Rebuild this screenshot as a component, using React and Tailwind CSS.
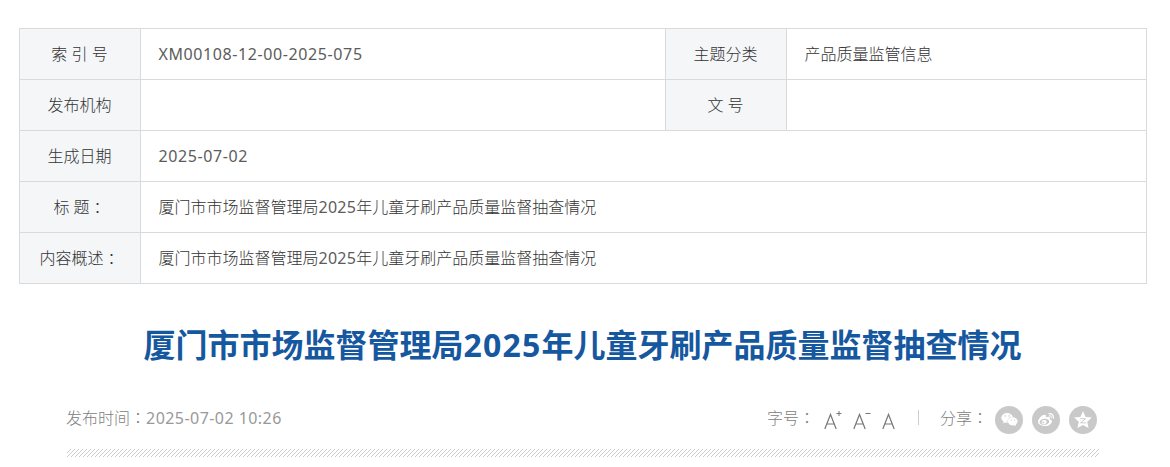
import React from "react";
import { FaWeixin, FaWeibo } from "react-icons/fa";

const title = ["厦门市市场监督管理局", "2025", "年儿童牙刷产品质量监督抽查情况"];

const Label = ({ children, className = "" }) => (
  <div className={`bg-[#f4f6f8] border-r border-[#dadada] h-[50px] pr-px flex items-center justify-center whitespace-pre ${className}`}>
    {children}
  </div>
);

const Latin = ({ children, className = "text-[#5c5c5c] tracking-[0.6px]" }) => (
  <span className={`font-normal ${className}`}>{children}</span>
);

// full-width colon, centred in its cell
const Colon = () => <span className="font-['Noto_Sans_CJK_TC',sans-serif]" lang="zh-TW">：</span>;

const Title = ({ latin }) => (
  <span>
    {title[0]}
    <span className={latin}>{title[1]}</span>
    {title[2]}
  </span>
);

const FontSize = ({ sign }) => (
  <svg width="20" height="22" viewBox="0 0 20 22" fill="none" stroke="#777" strokeWidth="1.2">
    <path d="M.8 19 6.5 4.5 12.2 19M2.8 14h7.4" />
    {sign && <path d="M12.5 3.5h5" strokeWidth="1" />}
    {sign === "+" && <path d="M15 1v5" strokeWidth="1" />}
  </svg>
);

const Share = ({ children }) => (
  <button className="w-7 h-7 rounded-full bg-[#c9c9c9] text-white flex items-center justify-center">
    {children}
  </button>
);

const App = () => {
  return (
    <div className="w-[1170px] h-[467px] bg-white overflow-hidden pt-7 pl-[19px] text-base font-light text-[#333] font-['Noto_Sans','Noto_Sans_CJK_SC',sans-serif]">

      {/* INFO TABLE */}
      <div className="w-[1128px] border border-[#dadada] divide-y divide-[#dadada]">
        <div className="grid grid-cols-[121px_524px_122px_1fr] items-center">
          <Label>索 引 号</Label>
          <div className="pl-[17.5px]"><Latin>XM00108-12-00-2025-075</Latin></div>
          <Label className="border-l">主题分类</Label>
          <div className="pl-[17.5px]">产品质量监管信息</div>
        </div>
        <div className="grid grid-cols-[121px_524px_122px_1fr] items-center">
          <Label>发布机构</Label>
          <div></div>
          <Label className="border-l">文 号</Label>
          <div></div>
        </div>
        <div className="grid grid-cols-[121px_1fr] items-center">
          <Label>生成日期</Label>
          <div className="pl-[17.5px]"><Latin>2025-07-02</Latin></div>
        </div>
        <div className="grid grid-cols-[121px_1fr] items-center">
          <Label>标 题<Colon /></Label>
          <div className="pl-[17.5px]"><Title latin="font-normal text-[#5c5c5c] tracking-[0.25px]" /></div>
        </div>
        <div className="grid grid-cols-[121px_1fr] items-center">
          <Label>内容概述<Colon /></Label>
          <div className="pl-[17.5px]"><Title latin="font-normal text-[#5c5c5c] tracking-[0.25px]" /></div>
        </div>
      </div>

      {/* HEADING */}
      <h1 className="w-[1127px] mt-[35px] h-[52px] leading-[52px] text-center text-[32px] font-bold text-[#1658a0] whitespace-nowrap">
        <Title latin="tracking-[1.2px]" />
      </h1>

      {/* META BAR */}
      <div className="ml-12 mt-8 w-[1032px] h-[30px] flex items-center text-[#808080]">
        <div className="w-[700px] -ml-px mr-px pb-0.5">
          发布时间<Colon /><Latin className="text-[#999] tracking-[0.45px]">2025-07-02 10:26</Latin>
        </div>
        <div className="w-[57px] pb-0.5">字号<Colon /></div>
        <div className="flex gap-[9px] pt-[5px]">
          <FontSize sign="+" />
          <FontSize sign="-" />
          <FontSize />
        </div>
        <div className="w-px h-[15px] bg-[#ccc] ml-4 mr-[21px] -mt-0.5"></div>
        <div className="w-[55px] pb-0.5">分享<Colon /></div>
        <div className="flex gap-[9px] pt-[3px]">
          <Share><FaWeixin size={17} /></Share>
          <Share><FaWeibo size={16} /></Share>
          <Share>
            <svg width="20" height="20" viewBox="0 0 18 18">
              <path d="M9 1l2.3 5.2 5.7.6-4.2 3.8 1.2 5.6L9 13.4l-5 2.8 1.2-5.6L1 6.8l5.7-.6z" fill="#fff" />
              <path d="M6.3 7.8h5L6.8 11.6h5" fill="none" stroke="#c9c9c9" strokeWidth="0.8" />
            </svg>
          </Share>
        </div>
      </div>

      {/* STRIPES */}
      <svg className="ml-12 mt-4 block" width="1032" height="8">
        <defs>
          <pattern id="stripes" width="4" height="4" patternUnits="userSpaceOnUse">
            <path d="M-1 5 5-1M-1 1 1-1M3 5 5 3" stroke="#ccc" strokeWidth="1" />
          </pattern>
        </defs>
        <rect width="1032" height="8" fill="url(#stripes)" />
      </svg>
    </div>
  );
};

export default App;
